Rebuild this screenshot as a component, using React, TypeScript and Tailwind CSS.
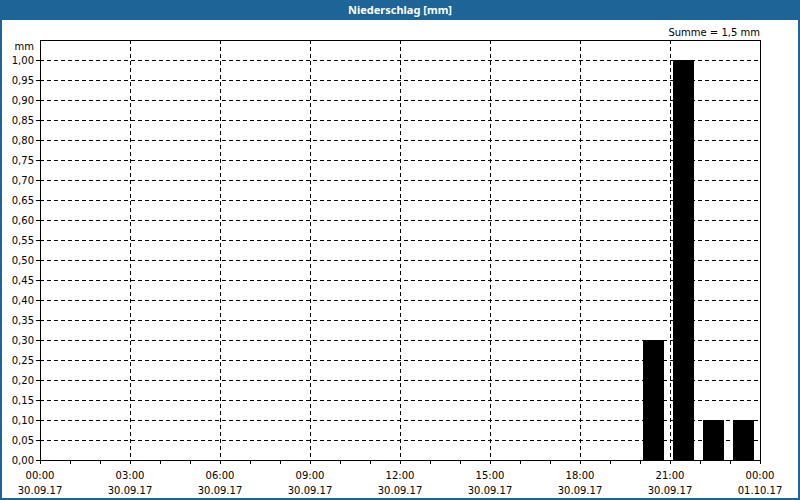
const ROWS = Array.from({ length: 21 }, (_, i) => i);
const COLS = ['00:00', '03:00', '06:00', '09:00', '12:00', '15:00', '18:00', '21:00', '00:00'];
const BARS = [
  { x: 643, v: 0.3 },
  { x: 673, v: 1.0 },
  { x: 703, v: 0.1 },
  { x: 733, v: 0.1 },
];

export default function App() {
  const font = { fontFamily: '"DejaVu Sans", Verdana, sans-serif', fontSize: 10 };
  return (
    <div className="w-[800px] h-[500px] flex flex-col bg-[#1e6496]">
      <div className="h-[20px] flex items-center justify-center text-white font-bold text-[11px] [font-family:'DejaVu_Sans',sans-serif]">
        Niederschlag [mm]
      </div>
      <div className="flex-1 mx-[2px] mb-[2px] bg-white">
        <svg width={796} height={478} style={font}>
          <g transform="translate(-2,-20)">
            {ROWS.map((i) => {
              const y = 60 + i * 20;
              const label = ((20 - i) * 0.05).toFixed(2).replace('.', ',');
              return (
                <g key={i}>
                  {i < 20 && (
                    <line x1={40} x2={760} y1={y + 0.5} y2={y + 0.5} stroke="#000" strokeDasharray="4 3" />
                  )}
                  <line x1={36} x2={40} y1={y + 0.5} y2={y + 0.5} stroke="#000" />
                  <text x={34} y={y + 4} textAnchor="end" fill="#000">{label}</text>
                </g>
              );
            })}
            <text x={34} y={50} textAnchor="end" fill="#000">mm</text>
            <text x={760} y={36} textAnchor="end" fill="#000">Summe = 1,5 mm</text>
            {COLS.map((c, i) => {
              const x = 40 + i * 90;
              return (
                <g key={i}>
                  {i > 0 && i < 8 && (
                    <line x1={x + 0.5} x2={x + 0.5} y1={40} y2={460} stroke="#000" strokeDasharray="4 3" />
                  )}
                  <text x={x} y={479} textAnchor="middle" fill="#000">{c}</text>
                  <text x={x} y={494} textAnchor="middle" fill="#000">{i === 8 ? '01.10.17' : '30.09.17'}</text>
                </g>
              );
            })}
            {Array.from({ length: 25 }, (_, i) => (
              <line key={i} x1={40 + i * 30 + 0.5} x2={40 + i * 30 + 0.5} y1={460} y2={464} stroke="#000" />
            ))}
            {BARS.map((b) => (
              <rect key={b.x} x={b.x} y={460 - b.v * 400} width={21} height={b.v * 400} fill="#000" />
            ))}
            <rect x={40.5} y={40.5} width={720} height={420} fill="none" stroke="#000" />
          </g>
        </svg>
      </div>
    </div>
  );
}
